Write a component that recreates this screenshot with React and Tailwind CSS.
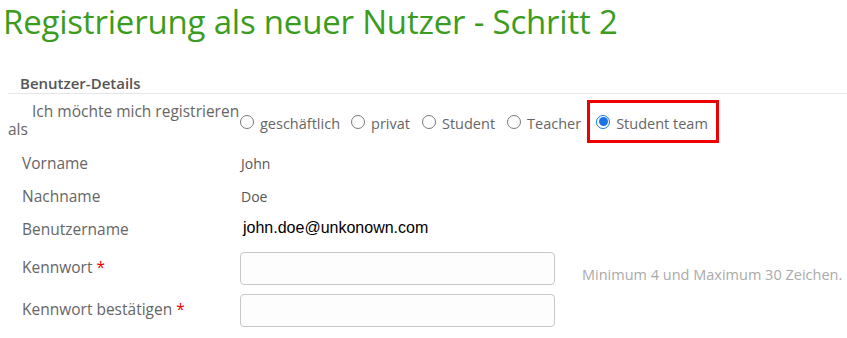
import React from "react";

const font = { fontFamily: '"Open Sans", "Noto Sans", sans-serif' };

function Radio({ checked }) {
  return checked ? (
    <span className="inline-flex w-[14px] h-[14px] rounded-full border border-[#1a73e8] bg-white items-center justify-center shrink-0">
      <span className="w-[9px] h-[9px] rounded-full bg-[#1a73e8]" />
    </span>
  ) : (
    <span className="inline-block w-[14px] h-[14px] rounded-full border border-[#7a7a7a] bg-white shrink-0" />
  );
}

function Option({ label, checked, className = "" }) {
  return (
    <span className={"flex items-center " + className}>
      <Radio checked={checked} />
      <span className="ml-[6px] mt-[5px] text-[14.5px] text-[#666] leading-[20px] whitespace-nowrap">{label}</span>
    </span>
  );
}

export default function App() {
  return (
    <div className="w-[847px] h-[338px] bg-white overflow-hidden" style={font}>
      <h1 className="pl-[3px] pt-[0px] text-[33px] leading-[44px] text-[#3c9c1e] font-normal tracking-[-0.2px] whitespace-nowrap">
        Registrierung als neuer Nutzer - Schritt 2
      </h1>
      <div className="mt-[28px] ml-[8px]">
        <div className="h-[22px] border-b border-[#e6e6e6] pl-[12px] pt-[1px] text-[15px] font-semibold text-[#555] leading-[20px]">
          Benutzer-Details
        </div>
        <div className="flex items-start h-[53px]">
          <div className="w-[232px] pt-[8px] text-[15.5px] leading-[18px] text-[#666] whitespace-nowrap">
            <span className="pl-[24px]">Ich möchte mich registrieren</span>
            <br />als
          </div>
          <div className="flex items-center pt-[6px]">
            <Option label="geschäftlich" className="mr-[11px]" />
            <Option label="privat" className="mr-[12px]" />
            <Option label="Student" className="mr-[12px]" />
            <Option label="Teacher" className="mr-[6px]" />
            <span className="flex items-center border-[3px] border-[#ee0000] h-[43px] pl-[6px] pr-[8px]">
              <Option label="Student team" checked />
            </span>
          </div>
        </div>
        <div className="flex items-center h-[33px]">
          <div className="w-[233px] pl-[14px] text-[15.5px] text-[#666]">Vorname</div>
          <div className="text-[14px] text-[#555]">John</div>
        </div>
        <div className="flex items-center h-[33px]">
          <div className="w-[233px] pl-[14px] text-[15.5px] text-[#666]">Nachname</div>
          <div className="text-[14px] text-[#555]">Doe</div>
        </div>
        <div className="flex items-center h-[33px]">
          <div className="w-[235px] pl-[14px] text-[15.5px] text-[#666]">Benutzername</div>
          <div className="text-[16px] text-black -mt-[3px]" style={{ fontFamily: '"Liberation Sans", Arial, sans-serif' }}>
            john.doe@unkonown.com
          </div>
        </div>
        <div className="flex items-center h-[42px] mt-[1px]">
          <div className="w-[232px] pl-[14px] text-[15.5px] text-[#666]">
            Kennwort <span className="text-[#e00]">*</span>
          </div>
          <div className="w-[315px] h-[33px] border border-[#c8c8c8] rounded-[4px] bg-[#fdfdfd]" />
          <div className="ml-[27px] mt-[14px] text-[14.5px] text-[#aaa] whitespace-nowrap">Minimum 4 und Maximum 30 Zeichen.</div>
        </div>
        <div className="flex items-center h-[42px]">
          <div className="w-[232px] pl-[14px] text-[15.5px] text-[#666]">
            Kennwort bestätigen <span className="text-[#e00]">*</span>
          </div>
          <div className="w-[315px] h-[33px] border border-[#c8c8c8] rounded-[4px] bg-[#fdfdfd]" />
        </div>
      </div>
    </div>
  );
}
